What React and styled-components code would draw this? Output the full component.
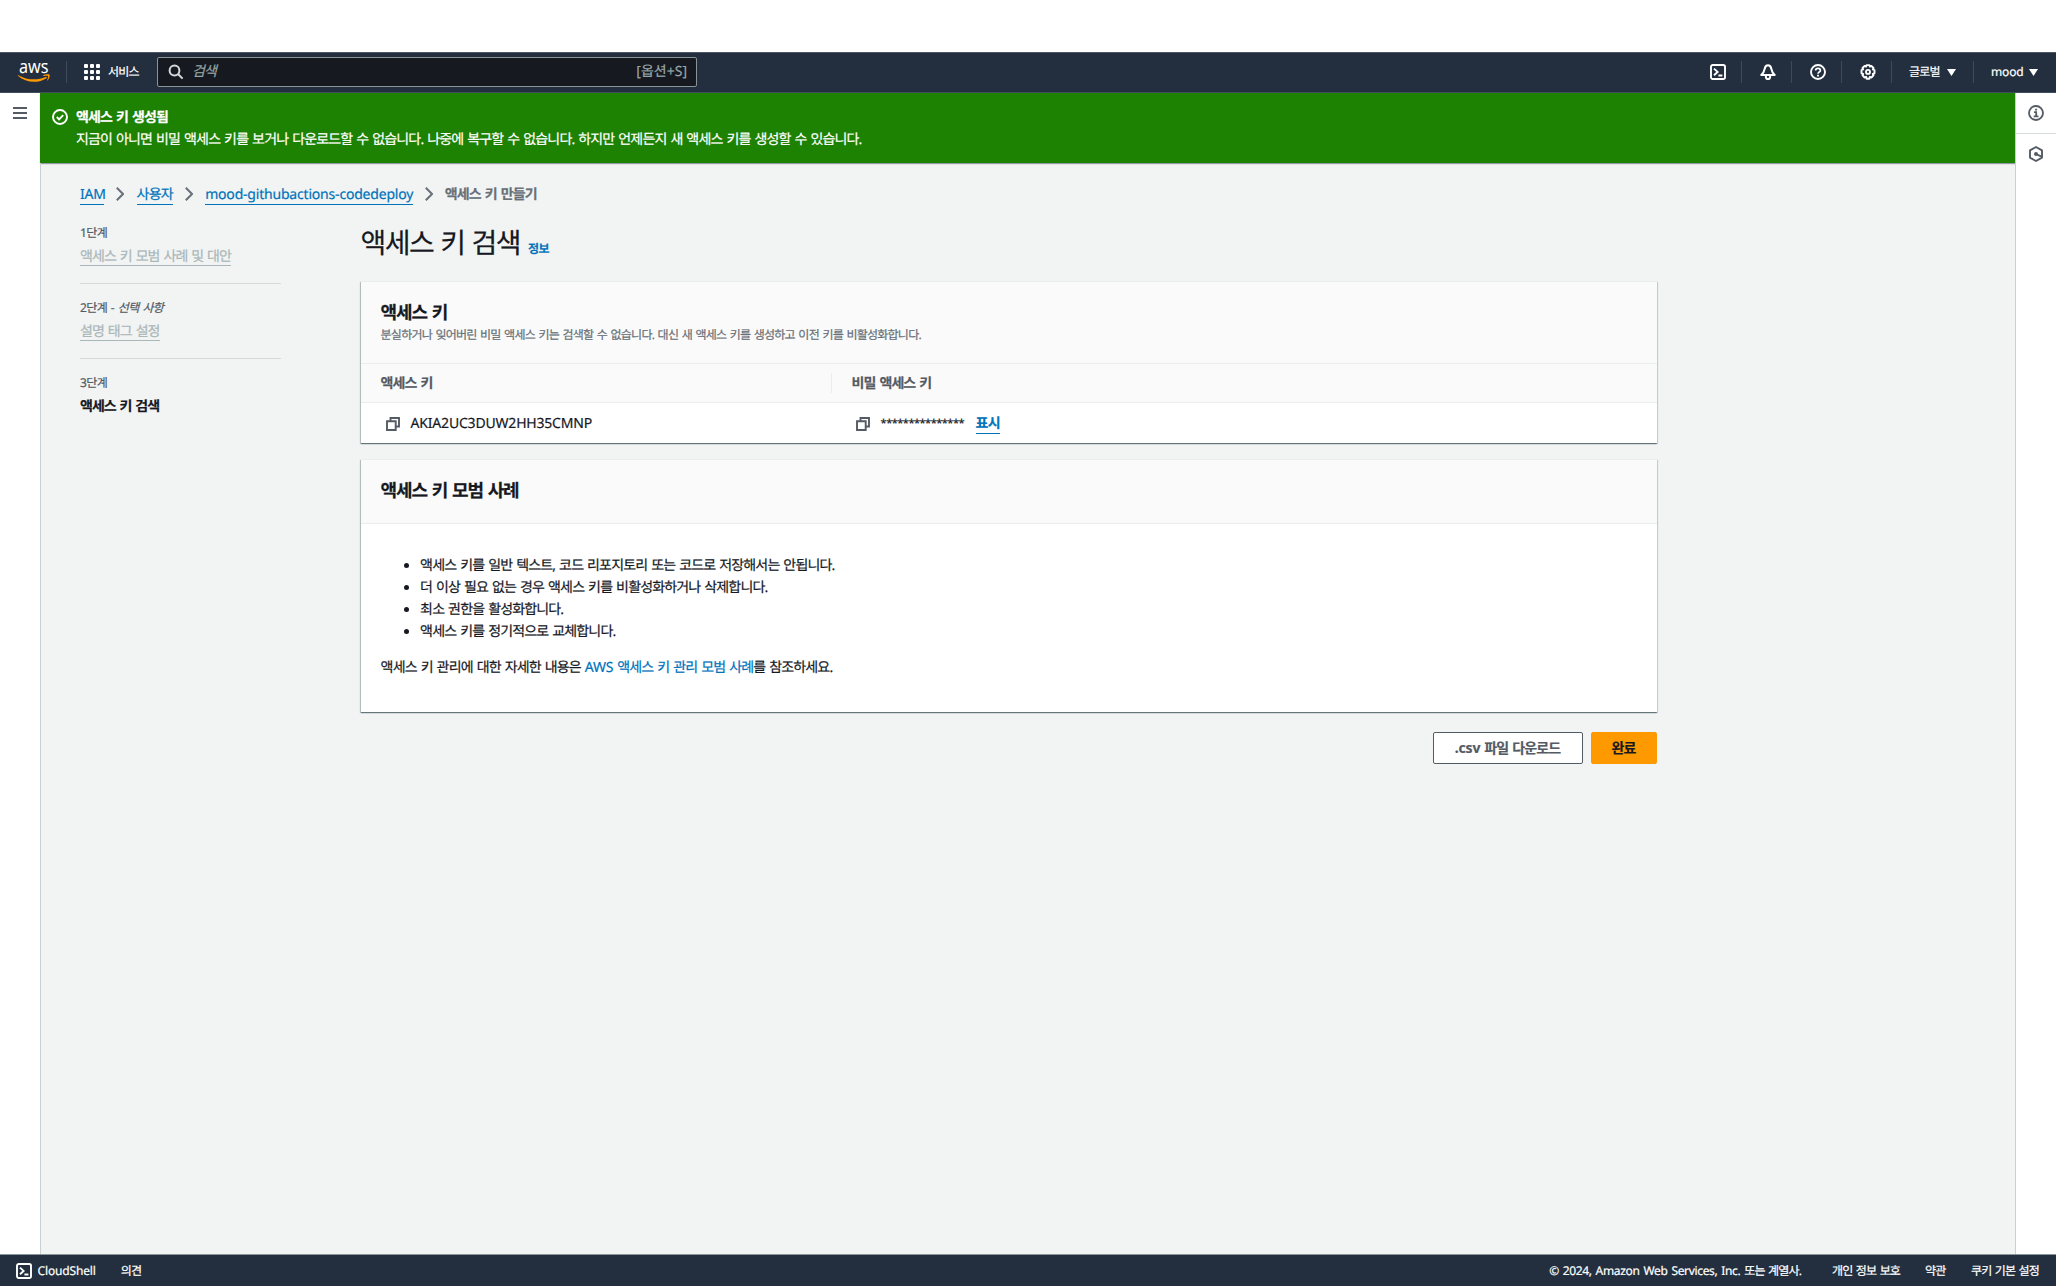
import React from "react";
import styled, { createGlobalStyle, css } from "styled-components";

const Global = createGlobalStyle`
  * { box-sizing: border-box; }
  html, body { margin: 0; padding: 0; background: #fff; overflow: hidden; }
  body {
    font-family: "Noto Sans", "Noto Sans CJK KR", sans-serif;
    font-size: 14px;
    line-height: 22px;
    letter-spacing: -0.84px;
    word-spacing: 1.12px;
    color: #16191f;
    text-rendering: geometricPrecision;
    -webkit-font-smoothing: antialiased;
    -webkit-text-stroke-width: 0.2px;
  }
  a { color: inherit; text-decoration: none; }
`;

const Page = styled.div`
  display: flex;
  flex-direction: column;
  width: 2056px;
  height: 1286px;
  padding-top: 52px;
`;

/* Latin runs use their own tracking */
const Latin = styled.span`
  letter-spacing: ${(p) => p.$track || "-0.014em"};
`;

/* ---------- top bar ---------- */
const TopBar = styled.header`
  display: flex;
  align-items: center;
  height: 41px;
  flex: none;
  padding-bottom: 1px;
  background: #232f3e;
  border-top: 1px solid #4b5563;
  border-bottom: 1px solid #414d5c;
  color: #fff;
  font-size: 12px;
`;
const LogoCell = styled.div`
  display: flex;
  padding: 0 16px 0 17px;
  width: 66px;
`;
const LogoSvg = styled.svg`
  display: block;
  overflow: visible;
`;
const BarDivider = styled.span`
  width: 1px;
  height: 22px;
  background: #3f4a58;
`;
const Services = styled.div`
  display: flex;
  align-items: center;
  gap: 8px;
  width: 90px;
  padding-left: 17px;
  white-space: nowrap;
`;
const DotGrid = styled.span`
  display: grid;
  grid-template-columns: repeat(3, 4px);
  grid-auto-rows: 4px;
  gap: 2px;
`;
const Dot = styled.i`
  background: #fff;
  border-radius: 1px;
`;
const SearchBox = styled.div`
  display: flex;
  align-items: center;
  width: 540px;
  height: 30px;
  padding: 0 9px 0 10px;
  background: #16191f;
  border: 1px solid #879596;
  border-radius: 2px;
  color: #95a5a6;
  font-size: 14px;
`;
const SearchHint = styled.span`
  flex: 1;
  margin-left: 8px;
  font-style: italic;
`;
const BarRight = styled.div`
  display: flex;
  align-items: center;
  margin-left: auto;
`;
const IconCell = styled.div`
  display: flex;
  align-items: center;
  justify-content: center;
  width: 49px;
  padding-left: 2px;
`;
const MenuCell = styled.div`
  display: flex;
  align-items: center;
  gap: ${(p) => p.$gap}px;
  width: ${(p) => p.$w}px;
  padding-left: 17px;
  color: #fff;
  white-space: nowrap;
`;
const MenuLabel = styled.span`
  width: ${(p) => p.$w}px;
`;

/* ---------- body ---------- */
const Body = styled.div`
  display: flex;
  flex: 1;
  min-height: 0;
`;
const LeftRail = styled.aside`
  display: flex;
  justify-content: center;
  width: 40px;
  padding-top: 13px;
`;
const RightRail = styled.aside`
  width: 41px;
  border-left: 1px solid #c9d0d3;
`;
const RailItem = styled.div`
  display: flex;
  align-items: center;
  justify-content: center;
  height: ${(p) => (p.$line ? 41 : 40)}px;
  border-bottom: ${(p) => (p.$line ? "1px solid #d5dbdb" : "0")};
`;
const Main = styled.main`
  display: flex;
  flex-direction: column;
  flex: 1;
  background: #f2f3f3;
`;
const Flash = styled.section`
  display: flex;
  gap: 8px;
  height: 70px;
  flex: none;
  padding: 13px 12px;
  background: #1d8102;
  color: #fff;
  box-shadow: 0 1px 1px 0 rgba(0, 28, 36, 0.4);
`;
const FlashIcon = styled.div`
  display: flex;
  padding-top: 3px;
`;
const FlashText = styled.div`
  padding-top: 1px;
`;
const FlashTitle = styled.div`
  font-weight: 700;
`;
const Content = styled.div`
  flex: 1;
  padding: 20px 0 0 39px;
  border-left: 1px solid #c9d0d3;
`;
const Crumbs = styled.nav`
  display: flex;
  align-items: center;
  height: 22px;
  gap: 12.3px;
  white-space: nowrap;
`;
const linkLine = css`
  height: 20px;
  line-height: 22px;
  border-bottom: 1px solid currentColor;
`;
const CrumbLink = styled.a`
  ${linkLine}
  width: ${(p) => p.$w}px;
  height: 21px;
  margin-top: 1px;
  color: #0073bb;
`;
const CrumbHere = styled.span`
  margin-left: -1px;
  padding-top: 2px;
  color: #687078;
  font-weight: 700;
`;
const Columns = styled.div`
  display: flex;
  gap: 80px;
`;
const Steps = styled.ol`
  list-style: none;
  margin: 0;
  padding: 18px 0 0;
  width: 200.6px;
`;
const Step = styled.li`
  border-bottom: ${(p) => (p.$last ? "0" : "1px solid #d5dbdb")};
  padding-top: ${(p) => (p.$first ? "1px" : "15px")};
  height: ${(p) => (p.$first ? "61px" : "75px")};
`;
const StepNo = styled.div`
  font-size: 12px;
  line-height: 18px;
  letter-spacing: -0.58px;
  color: #545b64;
`;
const StepLink = styled.a`
  ${linkLine}
  display: inline-block;
  margin-top: 4px;
  letter-spacing: -0.9px;
  color: #aab7b8;
`;
const StepActive = styled.div`
  margin-top: 5px;
  line-height: 20px;
  letter-spacing: -0.95px;
  font-weight: 700;
`;
const Panel = styled.div`
  width: 1296px;
`;
const Heading = styled.h1`
  display: flex;
  align-items: baseline;
  gap: 8px;
  height: 76px;
  margin: 0;
  padding-top: 20px;
  font-size: 28px;
  font-weight: 400;
  line-height: 36px;
  letter-spacing: -1.5px;
`;
const InfoLink = styled.a`
  color: #0073bb;
  font-size: 12px;
  font-weight: 700;
  letter-spacing: -0.6px;
`;
const Card = styled.section`
  height: ${(p) => p.$h}px;
  margin-bottom: ${(p) => p.$gap}px;
  background: #fff;
  border-top: 1px solid #eaeded;
  box-shadow: 0 1px 1px 0 rgba(0, 28, 36, 0.4), 1px 1px 1px 0 rgba(0, 28, 36, 0.12),
    -1px 1px 1px 0 rgba(0, 28, 36, 0.2);
`;
const CardHead = styled.div`
  height: ${(p) => p.$h}px;
  padding: 20px 20px 0;
  background: #fafafa;
  border-bottom: 1px solid #eaeded;
`;
const CardTitle = styled.h2`
  margin: 0;
  font-size: 18px;
  font-weight: 700;
  line-height: 22px;
  letter-spacing: -1.08px;
`;
const CardNote = styled.p`
  margin: 1px 0 0;
  color: #687078;
  font-size: 12px;
  line-height: 20px;
  letter-spacing: -0.76px;
`;
const Row = styled.div`
  display: grid;
  grid-template-columns: 470px 1fr;
  align-items: center;
  height: ${(p) => (p.$head ? 39 : 40)}px;
  background: ${(p) => (p.$head ? "#fafafa" : "#fff")};
  border-bottom: ${(p) => (p.$head ? "1px solid #eaeded" : "0")};
  color: ${(p) => (p.$head ? "#545b64" : "#16191f")};
  font-weight: ${(p) => (p.$head ? 700 : 400)};
`;
const HeadCell = styled.div`
  height: 20px;
  padding-left: 20px;
  line-height: 22px;
  letter-spacing: -0.9px;
  border-left: ${(p) => (p.$line ? "1px solid #eaeded" : "0")};
`;
const Cell = styled.div`
  display: flex;
  align-items: center;
  padding: 1px 0 0 25px;
  gap: 11px;
`;
const Stars = styled.span`
  width: 84px;
  font-size: 11px;
  letter-spacing: -0.5px;
`;
const ShowLink = styled.a`
  ${linkLine}
  line-height: 20px;
  color: #0073bb;
  font-weight: 700;
`;
const CardBody = styled.div`
  padding: 31px 20px 0;
`;
const Bullets = styled.ul`
  margin: 0 0 14px;
  padding-left: 39.500px;
`;
const Bullet = styled.li`
  line-height: 22px;
`;
const Para = styled.p`
  margin: 0;
`;
const TextLink = styled.a`
  color: #0073bb;
`;
const Actions = styled.div`
  display: flex;
  justify-content: flex-end;
  gap: 8px;
`;
const Button = styled.button`
  width: ${(p) => p.$w}px;
  height: 32px;
  padding: 0;
  border: 1px solid ${(p) => (p.$primary ? "#ff9900" : "#545b64")};
  border-radius: 2px;
  background: ${(p) => (p.$primary ? "#ff9900" : "#fff")};
  color: ${(p) => (p.$primary ? "#16191f" : "#545b64")};
  font: inherit;
  font-weight: 700;
  letter-spacing: inherit;
  word-spacing: inherit;
`;

/* ---------- footer ---------- */
const Footer = styled.footer`
  display: flex;
  align-items: center;
  height: 32px;
  flex: none;
  padding: 0 17px 0 16px;
  background: #232f3e;
  border-top: 1px solid #8b959c;
  color: #fff;
  font-size: 12px;
  white-space: nowrap;
`;
const FooterItem = styled.span`
  display: flex;
  align-items: center;
  gap: 5.500px;
  margin-right: 25px;
`;
const FooterRight = styled.div`
  display: flex;
  margin-left: auto;
`;
const FooterText = styled.span`
  margin-left: ${(p) => p.$gap || 0}px;
`;

/* ---------- icons ---------- */
const Stroke = ({ children, size = 16, color = "#fff", w = 2 }) => (
  <svg width={size} height={size} viewBox="0 0 16 16" fill="none" stroke={color} strokeWidth={w}>
    {children}
  </svg>
);
const AwsLogo = () => (
  <LogoSvg width="34" height="24" viewBox="0 0 34 24">
    <text x="2" y="12.6" fill="#fff" fontSize="18.500" fontFamily="Noto Sans"
      textLength="29.500" lengthAdjust="spacingAndGlyphs" letterSpacing="0">aws</text>
    <path d="M1.300 15.200C10 20.300 20.500 20.500 28.600 17c1-.4 1.700.5.8 1.200C21.500 23.600 9 23.200.9 15.800c-.4-.4 0-.8.4-.6z" fill="#ff9900" />
    <path d="M26.200 15.300c2-1.300 5.700-1.400 6.300-.7.600.8-.2 4.300-2 5.900-.3.200-.6.100-.4-.2.500-1.200 1.400-3.700.9-4.300-.5-.6-3-.3-4.400-.1-.5 0-.7-.3-.4-.6z" fill="#ff9900" />
  </LogoSvg>
);
const SearchIcon = () => (
  <Stroke>
    <circle cx="6.500" cy="6.500" r="4.900" stroke="#d5dbdb" />
    <path d="M10 10l4.600 4.600" stroke="#d5dbdb" />
  </Stroke>
);
const ShellIcon = () => (
  <Stroke w={1.9}>
    <rect x="1" y="1" width="14" height="14" rx="1.800" />
    <path d="M4 4.600l3.600 3.300L4 11.200M8.400 11.500h4" />
  </Stroke>
);
const BellIcon = () => (
  <Stroke>
    <path d="M8 1.300c-1.900 0-2.900 1.400-3.300 3.400C4.200 7.400 3 9.300 1.300 11h13.400c-1.700-1.700-2.900-3.600-3.400-6.300C10.900 2.700 9.900 1.300 8 1.300z" strokeLinejoin="round" />
    <path d="M5.900 11.500v1.400a2.100 2.100 0 0 0 4.200 0v-1.400" />
  </Stroke>
);
const HelpIcon = () => (
  <Stroke w={1.9}>
    <circle cx="8" cy="8" r="7" />
    <path d="M5.600 6.600c0-1.500 1-2.300 2.400-2.300s2.400.8 2.400 2.100c0 1.700-2.400 1.500-2.400 3.400" strokeWidth="1.700" />
    <path d="M8 10.700v1.800" />
  </Stroke>
);
const GearIcon = () => (
  <Stroke w={1.9}>
    <path strokeLinejoin="round" d="M6.600 1.100h2.800l.5 1.500 1.500-.7 2.100 2.100-.7 1.400 1.700.7v3.200l-1.700.7.7 1.400-2.100 2.100-1.500-.7-.5 1.900H6.600l-.5-1.900-1.500.7-2.100-2.100.7-1.400-1.700-.7V6.100l1.700-.7-.7-1.400 2.100-2.100 1.500.7z" />
    <circle cx="8" cy="7.900" r="2" />
  </Stroke>
);
const Caret = () => (
  <svg width="9" height="7" viewBox="0 0 9 7"><path d="M0 0h9L4.500 7z" fill="#fff" /></svg>
);
const MenuIcon = () => (
  <svg width="14" height="14" viewBox="0 0 14 14"><path d="M0 2h14M0 7h14M0 12h14" stroke="#545b64" strokeWidth="1.800" /></svg>
);
const CheckIcon = () => (
  <Stroke w={1.9}>
    <circle cx="8" cy="8" r="7" />
    <path d="M4.800 8l2.300 2.300 4.100-4.200" />
  </Stroke>
);
const InfoIcon = () => (
  <Stroke color="#545b64" w={1.8}>
    <circle cx="8" cy="8" r="7" />
    <path d="M6 7.200h2.200v4M5.700 11.400h4.800M7.100 4.600h2" />
  </Stroke>
);
const HexIcon = () => (
  <Stroke color="#545b64" w={1.9}>
    <path d="M8 1l6 3.400v7.200L8 15l-6-3.400V4.400z" strokeLinejoin="round" />
    <path d="M8 8l6 2.900" />
    <circle cx="8" cy="8" r="2" fill="#545b64" stroke="none" />
  </Stroke>
);
const CopyIcon = () => (
  <svg width="14" height="14" viewBox="0 0 14 14" fill="none" stroke="#545b64" strokeWidth="1.900">
    <path d="M1 4.300h8.700V13H1z" />
    <path d="M4.500 4V1H13v8.500h-3" />
  </svg>
);
const Chevron = () => (
  <svg width="8" height="14" viewBox="0 0 8 14" fill="none"><path d="M.8.8L7 7 .8 13.200" stroke="#687078" strokeWidth="2" /></svg>
);

const barIcons = [ShellIcon, BellIcon, HelpIcon, GearIcon];
const practices = [
  "액세스 키를 일반 텍스트, 코드 리포지토리 또는 코드로 저장해서는 안됩니다.",
  "더 이상 필요 없는 경우 액세스 키를 비활성화하거나 삭제합니다.",
  "최소 권한을 활성화합니다.",
  "액세스 키를 정기적으로 교체합니다.",
];

export default function App() {
  return (
    <Page>
      <Global />
      <TopBar>
        <LogoCell><AwsLogo /></LogoCell>
        <BarDivider />
        <Services>
          <DotGrid>{Array.from({ length: 9 }, (_, i) => <Dot key={i} />)}</DotGrid>
          서비스
        </Services>
        <SearchBox>
          <SearchIcon />
          <SearchHint>검색</SearchHint>
          <Latin $track="0">[옵션+S]</Latin>
        </SearchBox>
        <BarRight>
          {barIcons.map((Icon, i) => (
            <React.Fragment key={i}>
              <IconCell><Icon /></IconCell>
              <BarDivider />
            </React.Fragment>
          ))}
          <MenuCell $w={81} $gap={7}><MenuLabel $w={31}>글로벌</MenuLabel><Caret /></MenuCell>
          <BarDivider />
          <MenuCell $w={82} $gap={6}><MenuLabel $w={32}><Latin>mood</Latin></MenuLabel><Caret /></MenuCell>
        </BarRight>
      </TopBar>

      <Body>
        <LeftRail><MenuIcon /></LeftRail>
        <Main>
          <Flash>
            <FlashIcon><CheckIcon /></FlashIcon>
            <FlashText>
              <FlashTitle>액세스 키 생성됨</FlashTitle>
              <div>지금이 아니면 비밀 액세스 키를 보거나 다운로드할 수 없습니다. 나중에 복구할 수 없습니다. 하지만 언제든지 새 액세스 키를 생성할 수 있습니다.</div>
            </FlashText>
          </Flash>
          <Content>
            <Crumbs>
              <CrumbLink $w={24}><Latin>IAM</Latin></CrumbLink>
              <Chevron />
              <CrumbLink $w={36}>사용자</CrumbLink>
              <Chevron />
              <CrumbLink $w={208}><Latin>mood-githubactions-codedeploy</Latin></CrumbLink>
              <Chevron />
              <CrumbHere>액세스 키 만들기</CrumbHere>
            </Crumbs>
            <Columns>
              <Steps>
                <Step $first>
                  <StepNo>1단계</StepNo>
                  <StepLink>액세스 키 모범 사례 및 대안</StepLink>
                </Step>
                <Step>
                  <StepNo>2단계 - <em>선택 사항</em></StepNo>
                  <StepLink>설명 태그 설정</StepLink>
                </Step>
                <Step $last>
                  <StepNo>3단계</StepNo>
                  <StepActive>액세스 키 검색</StepActive>
                </Step>
              </Steps>
              <Panel>
                <Heading>액세스 키 검색<InfoLink>정보</InfoLink></Heading>
                <Card $h={162} $gap={16}>
                  <CardHead $h={82}>
                    <CardTitle>액세스 키</CardTitle>
                    <CardNote>분실하거나 잊어버린 비밀 액세스 키는 검색할 수 없습니다. 대신 새 액세스 키를 생성하고 이전 키를 비활성화합니다.</CardNote>
                  </CardHead>
                  <Row $head>
                    <HeadCell>액세스 키</HeadCell>
                    <HeadCell $line>비밀 액세스 키</HeadCell>
                  </Row>
                  <Row>
                    <Cell><CopyIcon /><Latin>AKIA2UC3DUW2HH35CMNP</Latin></Cell>
                    <Cell><CopyIcon /><Stars>***************</Stars><ShowLink>표시</ShowLink></Cell>
                  </Row>
                </Card>
                <Card $h={253} $gap={20}>
                  <CardHead $h={64}><CardTitle>액세스 키 모범 사례</CardTitle></CardHead>
                  <CardBody>
                    <Bullets>{practices.map((t) => <Bullet key={t}>{t}</Bullet>)}</Bullets>
                    <Para>액세스 키 관리에 대한 자세한 내용은 <TextLink><Latin>AWS</Latin> 액세스 키 관리 모범 사례</TextLink>를 참조하세요.</Para>
                  </CardBody>
                </Card>
                <Actions>
                  <Button $w={150}><Latin>.csv</Latin> 파일 다운로드</Button>
                  <Button $w={66} $primary>완료</Button>
                </Actions>
              </Panel>
            </Columns>
          </Content>
        </Main>
        <RightRail>
          <RailItem $line><InfoIcon /></RailItem>
          <RailItem><HexIcon /></RailItem>
        </RightRail>
      </Body>

      <Footer>
        <FooterItem><ShellIcon /><Latin $track="-0.012em">CloudShell</Latin></FooterItem>
        <FooterItem>의견</FooterItem>
        <FooterRight>
          <FooterText><Latin $track="-0.028em">© 2024, Amazon Web Services, Inc. </Latin>또는 계열사.</FooterText>
          <FooterText $gap={31}>개인 정보 보호</FooterText>
          <FooterText $gap={25}>약관</FooterText>
          <FooterText $gap={25.5}>쿠키 기본 설정</FooterText>
        </FooterRight>
      </Footer>
    </Page>
  );
}
